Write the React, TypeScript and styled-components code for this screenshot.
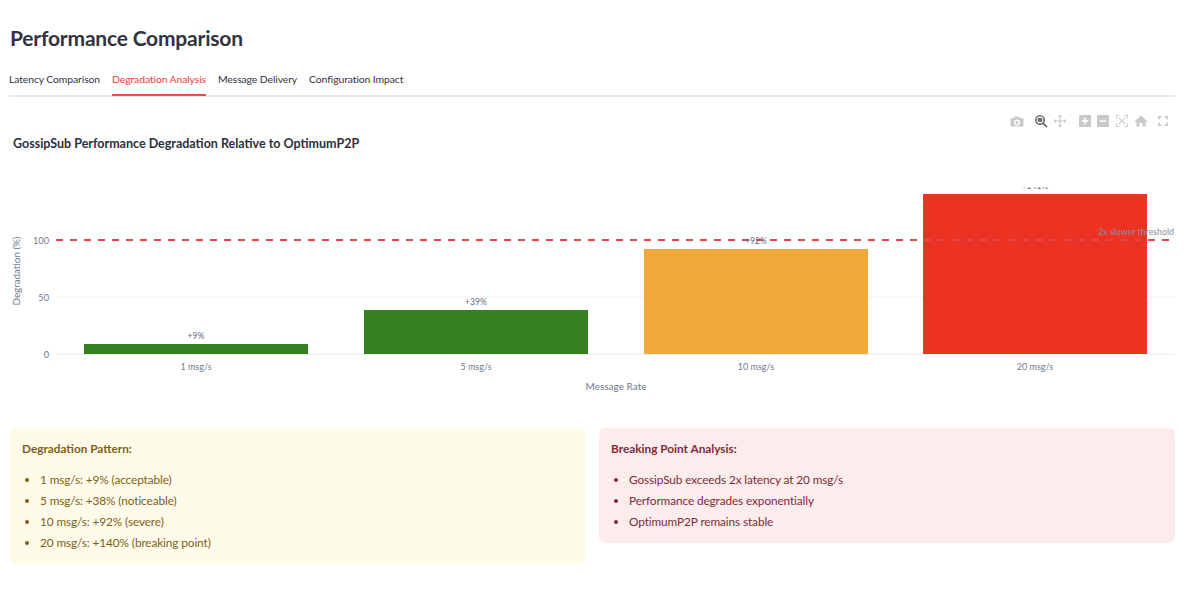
import React from "react";
import styled, { createGlobalStyle } from "styled-components";

const FONT = `"Lato", "Noto Sans", "Open Sans", "Liberation Sans", sans-serif`;

const Global = createGlobalStyle`
  html, body { margin: 0; padding: 0; background: #fff; }
  body { font-family: ${FONT}; }
`;

const Page = styled.div`
  width: 1200px;
  height: 589px;
  box-sizing: border-box;
  padding: 23px 25px 0 10px;
  overflow: hidden;
`;

const Title = styled.h1`
  margin: 0;
  font-size: 21px;
  line-height: 30px;
  font-weight: 700;
  letter-spacing: -0.2px;
  color: #31333f;
`;

const Tabs = styled.div`
  display: flex;
  gap: 12px;
  margin: 15px 0 0 -1px;
  height: 27px;
  border-bottom: 2px solid #e8e8ea;
`;

const Tab = styled.div<{ $active?: boolean }>`
  height: 28px;
  box-sizing: border-box;
  padding-top: 3px;
  font-size: 10.4px;
  line-height: 16px;
  letter-spacing: -0.1px;
  white-space: nowrap;
  color: ${(p) => (p.$active ? "#ee3b3b" : "#31333f")};
  border-bottom: 2px solid ${(p) => (p.$active ? "#ee4b4b" : "transparent")};
`;

const ChartWrap = styled.div`
  position: relative;
  height: 300px;
  margin-top: 8px;
`;

const ChartSvg = styled.svg`
  display: block;
  width: 1165px;
  height: 300px;
  font-family: ${FONT};
`;

const ModeBar = styled.div`
  position: absolute;
  top: 8px;
  right: 0;
  width: 165px;
  height: 18px;
`;

const ModeIcon = styled.svg<{ $x: number; $active?: boolean }>`
  position: absolute;
  left: ${(p) => p.$x}px;
  top: 1px;
  width: 14px;
  height: 14px;
  fill: ${(p) => (p.$active ? "#6b6b6b" : "#c9c9c9")};
`;

const Panels = styled.div`
  display: grid;
  grid-template-columns: 577px 576px;
  gap: 12px;
  align-items: start;
  margin-top: 23px;
`;

const Panel = styled.div<{ $tone: "warn" | "err" }>`
  box-sizing: border-box;
  padding: 12px 12px 11px;
  border-radius: 6px;
  background: ${(p) => (p.$tone === "warn" ? "#fffbeb" : "#fdecec")};
  color: ${(p) => (p.$tone === "warn" ? "#7d5f14" : "#7a2c38")};
`;

const PanelTitle = styled.div`
  font-size: 11.8px;
  line-height: 18px;
  font-weight: 700;
`;

const List = styled.ul`
  margin: 11px 0 0;
  padding: 0 0 0 18px;
  list-style: disc;
`;

const Item = styled.li`
  font-size: 11.8px;
  line-height: 21px;
  letter-spacing: -0.1px;
`;

const bars = [
  { x: 84, top: 344, fill: "#35801f", label: "+9%", cat: "1 msg/s" },
  { x: 364, top: 310, fill: "#35801f", label: "+39%", cat: "5 msg/s" },
  { x: 644, top: 249, fill: "#f1a93b", label: "+92%", cat: "10 msg/s" },
  { x: 923, top: 194, fill: "#ec3323", label: "+141%", cat: "20 msg/s" },
];

const warnItems = [
  "1 msg/s: +9% (acceptable)",
  "5 msg/s: +38% (noticeable)",
  "10 msg/s: +92% (severe)",
  "20 msg/s: +140% (breaking point)",
];

const errItems = [
  "GossipSub exceeds 2x latency at 20 msg/s",
  "Performance degrades exponentially",
  "OptimumP2P remains stable",
];

function Chart() {
  return (
    <ChartSvg viewBox="10 105 1165 300">
      <text x="13" y="148" fontSize="12.5" fontWeight="700" style={{ fill: "#2b2f3f" }}>
        GossipSub Performance Degradation Relative to OptimumP2P
      </text>
      <line x1="56" x2="1175" y1="297" y2="297" stroke="#eff0f4" strokeWidth="1" />
      <line x1="56" x2="1175" y1="354" y2="354" stroke="#e8eaf0" strokeWidth="1" />
      {[
        ["100", 244],
        ["50", 301],
        ["0", 358],
      ].map(([t, y]) => (
        <text key={t} x="49" y={y} textAnchor="end" fontSize="9.2" fill="#6f7a90">
          {t}
        </text>
      ))}
      <text
        transform="translate(20 271) rotate(-90)"
        textAnchor="middle"
        fontSize="9.8"
        fill="#6f7a90"
      >
        Degradation (%)
      </text>
      {bars.map((b) => (
        <rect key={b.x} x={b.x} y={b.top} width="224" height={354 - b.top} fill={b.fill} />
      ))}
      <line
        x1="56"
        x2="1175"
        y1="240"
        y2="240"
        stroke="#e2474a"
        strokeWidth="2"
        strokeDasharray="7 7"
      />
      {bars.map((b) => (
        <text
          key={b.cat}
          x={b.x + 112}
          y={b.top - 5}
          textAnchor="middle"
          fontSize="8.6"
          fill="#5f6b80"
        >
          {b.label}
        </text>
      ))}
      {/* the topmost bar label is clipped by the plot area in the original */}
      <rect x="1000" y="176" width="90" height="11" fill="#fff" />
      <text x="1174" y="235" textAnchor="end" fontSize="8.8" fill="#8a92a4">
        2x slower threshold
      </text>
      {bars.map((b) => (
        <text
          key={b.label}
          x={b.x + 112}
          y="370"
          textAnchor="middle"
          fontSize="9"
          fill="#6f7a90"
        >
          {b.cat}
        </text>
      ))}
      <text x="616" y="390" textAnchor="middle" fontSize="10" fill="#6f7a90">
        Message Rate
      </text>
    </ChartSvg>
  );
}

function Bar() {
  return (
    <ModeBar>
      <ModeIcon $x={0} viewBox="0 0 14 14">
        <path d="M5 2.5h4l1 1.5h2.5A1 1 0 0 1 13.5 5v6.5a1 1 0 0 1-1 1h-11a1 1 0 0 1-1-1V5a1 1 0 0 1 1-1H4zM7 5.5a3 3 0 1 0 0 6 3 3 0 0 0 0-6zm0 1.3a1.7 1.7 0 1 1 0 3.4 1.7 1.7 0 0 1 0-3.4z" fillRule="evenodd" />
      </ModeIcon>
      <ModeIcon $x={24} $active viewBox="0 0 14 14">
        <path d="M6 1a5 5 0 0 1 4 8l3.6 3.6-1.2 1.2L8.8 10.2A5 5 0 1 1 6 1zm0 1.6a3.4 3.4 0 1 0 0 6.8 3.4 3.4 0 0 0 0-6.8z" fillRule="evenodd" />
        <rect x="3.8" y="4" width="4.4" height="3.8" />
      </ModeIcon>
      <ModeIcon $x={43} viewBox="0 0 14 14">
        <path d="M7 .5 9 3H7.6v3.4H11V5l2.5 2L11 9V7.6H7.6V11H9l-2 2.5L5 11h1.4V7.6H3V9L.5 7 3 5v1.4h3.4V3H5z" />
      </ModeIcon>
      <ModeIcon $x={68} viewBox="0 0 14 14">
        <path d="M2 1h10a1 1 0 0 1 1 1v10a1 1 0 0 1-1 1H2a1 1 0 0 1-1-1V2a1 1 0 0 1 1-1zm4.2 2.8v2.4H3.8v1.6h2.4v2.4h1.6V7.8h2.4V6.2H7.8V3.8z" fillRule="evenodd" />
      </ModeIcon>
      <ModeIcon $x={86} viewBox="0 0 14 14">
        <path d="M2 1h10a1 1 0 0 1 1 1v10a1 1 0 0 1-1 1H2a1 1 0 0 1-1-1V2a1 1 0 0 1 1-1zm1.8 5.2v1.6h6.4V6.2z" fillRule="evenodd" />
      </ModeIcon>
      <ModeIcon $x={105} viewBox="0 0 14 14">
        <path d="M1 1h3.4v1H2v2.4H1zM9.6 1H13v3.4h-1V2H9.6zM1 9.6h1V12h2.4v1H1zM12 9.6h1V13H9.6v-1H12zM4 3.2 7 6.2l3-3 .8.8-3 3 3 3-.8.8-3-3-3 3-.8-.8 3-3-3-3z" />
      </ModeIcon>
      <ModeIcon $x={124} viewBox="0 0 14 14">
        <path d="M7 1.5 13.5 7.5 12.5 8.5 11.5 7.6V12.5H8.5V9h-3v3.5h-3V7.6L1.5 8.5.5 7.5z" />
      </ModeIcon>
      <ModeIcon $x={146} viewBox="0 0 14 14">
        <path d="M2 2h3.6v1.6H3.6v2H2zM8.4 2H12v3.6h-1.6v-2h-2zM2 8.4h1.6v2h2V12H2zM10.4 8.4H12V12H8.4v-1.6h2z" />
      </ModeIcon>
    </ModeBar>
  );
}

export default function App() {
  return (
    <Page>
      <Global />
      <Title>Performance Comparison</Title>
      <Tabs>
        <Tab>Latency Comparison</Tab>
        <Tab $active>Degradation Analysis</Tab>
        <Tab>Message Delivery</Tab>
        <Tab>Configuration Impact</Tab>
      </Tabs>
      <ChartWrap>
        <Chart />
        <Bar />
      </ChartWrap>
      <Panels>
        <Panel $tone="warn">
          <PanelTitle>Degradation Pattern:</PanelTitle>
          <List>
            {warnItems.map((t) => (
              <Item key={t}>{t}</Item>
            ))}
          </List>
        </Panel>
        <Panel $tone="err">
          <PanelTitle>Breaking Point Analysis:</PanelTitle>
          <List>
            {errItems.map((t) => (
              <Item key={t}>{t}</Item>
            ))}
          </List>
        </Panel>
      </Panels>
    </Page>
  );
}
